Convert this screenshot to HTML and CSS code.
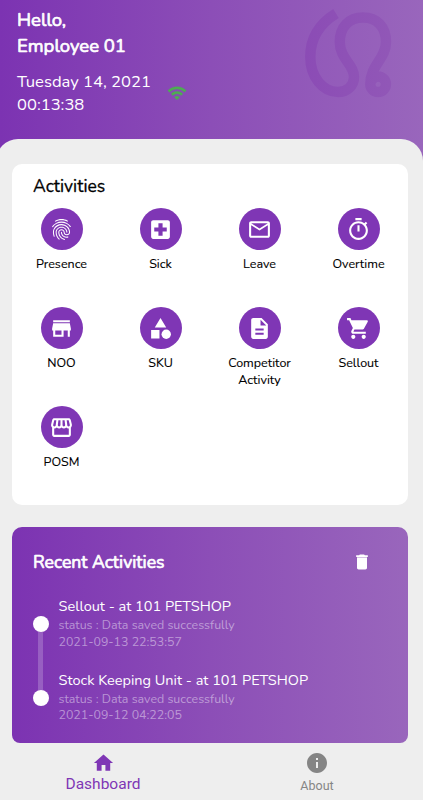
FILE: index.html
```html
<!DOCTYPE html>
<html>
	<head>
		<meta charset="UTF-8">
		<title>Dashboard</title>
		<link rel="stylesheet" href="styles.css">
	</head>
	<body>
		<div class="header">
			<div class="hello">Hello,<br>Employee 01</div>
			<div class="clock">
				<div class="date">Tuesday 14, 2021<br>00:13:38</div>
				<svg class="wifi" viewBox="0 0 24 24"><path d="M1 9l2 2c4.97-4.97 13.03-4.97 18 0l2-2C16.93 2.93 7.08 2.93 1 9zm8 8l3 3 3-3c-1.65-1.66-4.34-1.66-6 0zm-4-4l2 2c2.76-2.76 7.24-2.76 10 0l2-2C15.14 9.14 8.87 9.14 5 13z"/></svg>
			</div>
			<svg class="logo" viewBox="0 0 90 92">
				<defs>
					<linearGradient id="logoLine" gradientUnits="userSpaceOnUse" x1="0" y1="0" x2="90" y2="0">
						<stop offset="0" stop-color="#8b4bb5"/>
						<stop offset="1" stop-color="#9157b7"/>
					</linearGradient>
				</defs>
				<path d="M36 7.500C19 18 10.300 32 10.300 51C10.300 71 23 86 38 86C47 86 54 80 54 71C54 58 39.800 53 39.800 36C39.800 21 49 11.500 63 11.500C77 11.500 86 21 86 36C86 53 70.300 59 70.300 78.300A7.800 7.800 0 1 0 78.100 70.500Q74 70.500 71 75" fill="none" stroke="url(#logoLine)" stroke-width="10.500"/>
			</svg>
		</div>
		<div class="main">
			<div class="card">
				<div class="title">Activities</div>
				<div class="menu">
					<div class="item">
						<div class="icon"><svg viewBox="0 0 24 24"><path d="M17.810 4.470c-.08 0-.16-.02-.23-.06C15.660 3.420 14 3 12.010 3c-1.980 0-3.860.47-5.570 1.410-.24.13-.54.04-.68-.2-.13-.24-.04-.55.2-.68C7.820 2.520 9.860 2 12.010 2c2.130 0 3.990.47 6.030 1.520.25.13.34.43.21.67-.09.18-.26.28-.44.28zM3.500 9.720c-.1 0-.2-.03-.29-.09-.23-.16-.28-.47-.12-.7.99-1.400 2.250-2.500 3.750-3.270C9.980 4.040 14 4.030 17.150 5.650c1.500.77 2.760 1.860 3.750 3.250.16.22.11.54-.12.7-.23.16-.54.11-.7-.12-.9-1.260-2.040-2.250-3.390-2.940-2.870-1.470-6.540-1.470-9.400.01-1.360.7-2.500 1.700-3.400 2.960-.08.14-.23.21-.39.21zm6.250 12.070c-.13 0-.26-.05-.35-.15-.87-.87-1.340-1.430-2.010-2.640-.69-1.230-1.050-2.730-1.050-4.340 0-2.970 2.540-5.390 5.660-5.390s5.660 2.420 5.660 5.390c0 .28-.22.5-.5.5s-.5-.22-.5-.5c0-2.420-2.090-4.390-4.660-4.390-2.570 0-4.660 1.970-4.660 4.390 0 1.440.32 2.770.93 3.850.64 1.150 1.080 1.640 1.850 2.420.19.2.19.51 0 .71-.11.1-.24.15-.37.15zm7.170-1.850c-1.190 0-2.240-.3-3.100-.89-1.490-1.010-2.380-2.650-2.380-4.390 0-.28.22-.5.5-.5s.5.22.5.5c0 1.410.72 2.740 1.940 3.560.71.48 1.540.71 2.540.71.24 0 .64-.03 1.040-.1.27-.05.53.13.58.41.05.27-.13.53-.41.58-.57.11-1.070.12-1.210.12zM14.910 22c-.04 0-.09-.01-.13-.02-1.590-.44-2.630-1.030-3.720-2.100-1.400-1.390-2.170-3.240-2.170-5.220 0-1.620 1.380-2.940 3.080-2.940s3.080 1.320 3.080 2.940c0 1.070.93 1.940 2.080 1.940s2.080-.87 2.080-1.940c0-3.770-3.250-6.830-7.250-6.830-2.840 0-5.440 1.580-6.610 4.030-.39.81-.59 1.760-.59 2.800 0 .78.07 2.010.67 3.610.1.26-.03.55-.29.64-.26.1-.55-.04-.64-.29-.49-1.310-.73-2.610-.73-3.960 0-1.200.23-2.290.68-3.240 1.330-2.790 4.280-4.600 7.510-4.600 4.550 0 8.250 3.510 8.250 7.830 0 1.620-1.380 2.940-3.080 2.940s-3.080-1.320-3.080-2.940c0-1.070-.93-1.940-2.080-1.940s-2.080.87-2.080 1.940c0 1.710.66 3.310 1.870 4.510.95.94 1.860 1.460 3.270 1.850.27.07.42.35.35.61-.05.23-.26.38-.47.38z"/></svg></div>
						<span>Presence</span>
					</div>
					<div class="item">
						<div class="icon"><svg viewBox="0 0 24 24"><path d="M19 3H5c-1.100 0-2 .9-2 2v14c0 1.100.9 2 2 2h14c1.100 0 2-.9 2-2V5c0-1.100-.9-2-2-2zm-1 11h-4v4h-4v-4H6v-4h4V6h4v4h4v4z"/></svg></div>
						<span>Sick</span>
					</div>
					<div class="item">
						<div class="icon"><svg viewBox="0 0 24 24"><path d="M20 4H4c-1.100 0-2 .9-2 2v12c0 1.100.9 2 2 2h16c1.100 0 2-.9 2-2V6c0-1.100-.9-2-2-2zm0 14H4V8l8 5 8-5v10zm-8-7L4 6h16l-8 5z"/></svg></div>
						<span>Leave</span>
					</div>
					<div class="item">
						<div class="icon"><svg viewBox="0 0 24 24"><path d="M15 1H9v2h6V1zm-4 13h2V8h-2v6zm8.030-6.610l1.420-1.420c-.43-.51-.9-.99-1.410-1.410l-1.420 1.420C16.070 4.740 14.120 4 12 4c-4.970 0-9 4.030-9 9s4.020 9 9 9 9-4.030 9-9c0-2.120-.74-4.070-1.970-5.610zM12 20c-3.870 0-7-3.130-7-7s3.130-7 7-7 7 3.130 7 7-3.130 7-7 7z"/></svg></div>
						<span>Overtime</span>
					</div>
					<div class="item">
						<div class="icon"><svg viewBox="0 0 24 24"><path d="M20 4H4v2h16V4zm1 10v-2l-1-5H4l-1 5v2h1v6h10v-6h4v6h2v-6h1zm-9 4H6v-4h6v4z"/></svg></div>
						<span>NOO</span>
					</div>
					<div class="item">
						<div class="icon"><svg viewBox="0 0 24 24"><path d="M12 2l-5.500 9h11zM3 13.500h8v8H3z"/><circle cx="17.500" cy="17.500" r="4.500"/></svg></div>
						<span>SKU</span>
					</div>
					<div class="item">
						<div class="icon"><svg viewBox="0 0 24 24"><path d="M14 2H6c-1.100 0-1.990.9-1.990 2L4 20c0 1.100.89 2 1.990 2H18c1.100 0 2-.9 2-2V8l-6-6zm2 16H8v-2h8v2zm0-4H8v-2h8v2zm-3-5V3.500L18.500 9H13z"/></svg></div>
						<span>Competitor<br>Activity</span>
					</div>
					<div class="item">
						<div class="icon"><svg viewBox="0 0 24 24"><path d="M7 18c-1.100 0-1.990.9-1.990 2S5.900 22 7 22s2-.9 2-2-.9-2-2-2zM1 2v2h2l3.600 7.590-1.350 2.450c-.16.28-.25.61-.25.96 0 1.100.9 2 2 2h12v-2H7.420c-.14 0-.25-.11-.25-.25l.03-.12.9-1.630h7.450c.75 0 1.410-.41 1.750-1.030l3.580-6.490c.08-.14.12-.31.12-.48 0-.55-.45-1-1-1H5.210l-.94-2H1zm16 16c-1.100 0-1.990.9-1.990 2s.89 2 1.990 2 2-.9 2-2-.9-2-2-2z"/></svg></div>
						<span>Sellout</span>
					</div>
					<div class="item">
						<div class="icon"><svg viewBox="0 0 24 24"><path d="M21.900 8.890l-1.050-4.370c-.22-.9-1-1.520-1.910-1.520H5.050c-.9 0-1.690.63-1.900 1.520L2.100 8.890c-.24 1.020-.02 2.060.62 2.880.08.11.19.19.28.29V19c0 1.100.9 2 2 2h14c1.100 0 2-.9 2-2v-6.940c.09-.09.2-.18.28-.28.64-.82.87-1.870.62-2.890zM18.910 4.990l1.050 4.370c.1.42.01.84-.25 1.170-.14.18-.44.47-.94.47-.61 0-1.140-.49-1.210-1.140L16.980 5l1.930-.01zM13 5h1.960l.54 4.520c.05.39-.07.78-.33 1.070-.22.26-.54.41-.95.41-.67 0-1.220-.59-1.220-1.310V5zM8.490 9.520L9.040 5H11v4.690c0 .72-.55 1.310-1.290 1.310-.34 0-.65-.15-.89-.41-.25-.29-.37-.68-.33-1.070zM4.040 9.360L5.050 5h1.970l-.58 4.860c-.08.65-.6 1.140-1.210 1.140-.49 0-.8-.29-.93-.47-.27-.32-.36-.75-.26-1.170zM5 19v-6.030c.08.01.15.03.23.03.87 0 1.660-.36 2.240-.95.6.6 1.400.95 2.310.95.87 0 1.650-.36 2.230-.93.59.57 1.390.93 2.290.93.84 0 1.640-.35 2.240-.95.58.59 1.370.95 2.240.95.08 0 .15-.02.23-.03V19H5z"/></svg></div>
						<span>POSM</span>
					</div>
				</div>
			</div>
			<div class="recent">
				<div class="recentTop">
					<div class="recentTitle">Recent Activities</div>
					<svg class="trash" viewBox="0 0 24 24"><path d="M6 19c0 1.100.9 2 2 2h8c1.100 0 2-.9 2-2V7H6v12zM19 4h-3.500l-1-1h-5l-1 1H5v2h14V4z"/><path d="M6 6h12v1H6z" opacity=".6"/></svg>
				</div>
				<div class="log">
					<div class="line">
						<i></i>
						<b></b>
						<i></i>
					</div>
					<div class="list">
						<div class="row">
							<p class="name">Sellout - at 101 PETSHOP</p>
							<p class="status">status : Data saved successfully</p>
							<p class="time">2021-09-13 22:53:57</p>
						</div>
						<div class="row">
							<p class="name">Stock Keeping Unit - at 101 PETSHOP</p>
							<p class="status">status : Data saved successfully</p>
							<p class="time">2021-09-12 04:22:05</p>
						</div>
					</div>
				</div>
			</div>
		</div>
		<div class="nav">
			<div class="tab active">
				<svg viewBox="0 0 24 24"><path d="M10 20v-6h4v6h5v-8h3L12 3 2 12h3v8z"/></svg>
				<span>Dashboard</span>
			</div>
			<div class="tab">
				<svg viewBox="0 0 24 24"><path d="M12 2C6.480 2 2 6.480 2 12s4.480 10 10 10 10-4.480 10-10S17.520 2 12 2zm1 15h-2v-6h2v6zm0-8h-2V7h2v2z"/></svg>
				<span>About</span>
			</div>
		</div>
	</body>
</html>
```
FILE: styles.css
```css
*{
	margin: 0;
	padding: 0;
	box-sizing: border-box;
}
body{
	width: 423px;
	height: 800px;
	overflow: hidden;
	display: flex;
	flex-direction: column;
	background-color: #eee;
	font-family: Nunito, Lato, sans-serif;
}
.header{
	position: relative;
	height: 170px;
	flex: none;
	padding: 7px 17px;
	color: white;
	background: linear-gradient(to right, #7c33b2, #8c4eb7 50%, #9966bc);
}
.hello{
	font-size: 18.5px;
	line-height: 26px;
	-webkit-text-stroke: 0.7px white;
}
.clock{
	display: flex;
	gap: 16px;
	margin-top: 11px;
}
.date{
	padding-top: 1px;
	font-size: 16.6px;
	line-height: 22.5px;
}
.wifi{
	width: 20px;
	height: 20px;
	margin-top: 13px;
	fill: #4caf50;
	stroke: #4caf50;
	stroke-width: 0.5;
}
.logo{
	position: absolute;
	left: 300px;
	top: 6px;
	width: 90px;
	height: 92px;
	overflow: visible;
}
.main{
	position: relative;
	flex: 1;
	margin: -31px 0 0 -4px;
	padding: 25px 15px 0 16px;
	border-radius: 22px 22px 0 0;
	background-color: #eee;
}
.card{
	height: 341px;
	padding-top: 11px;
	border-radius: 10px;
	background-color: white;
}
.title{
	padding-left: 21px;
	font-size: 17.5px;
	line-height: 22px;
	-webkit-text-stroke: 0.3px black;
}
.menu{
	display: grid;
	grid-template-columns: repeat(4, 99px);
	grid-auto-rows: 99px;
	margin-top: 11px;
}
.item{
	display: flex;
	flex-direction: column;
	align-items: center;
	text-align: center;
	font-size: 12.5px;
	line-height: 17px;
	-webkit-text-stroke: 0.1px black;
}
.icon{
	display: flex;
	align-items: center;
	justify-content: center;
	width: 42px;
	height: 42px;
	margin-bottom: 5px;
	border-radius: 50%;
	background-color: #7f36b5;
}
.icon svg{
	width: 25px;
	height: 25px;
	fill: white;
}
.recent{
	height: 216px;
	margin-top: 22px;
	padding: 23px 0 0 21px;
	border-radius: 10px 10px 8px 8px;
	color: white;
	background: linear-gradient(to right, #7c33b2, #8c4eb7 50%, #9966bc);
}
.recentTop{
	display: flex;
	justify-content: space-between;
	padding-right: 36px;
}
.recentTitle{
	font-size: 17.6px;
	line-height: 24px;
	-webkit-text-stroke: 0.7px white;
}
.trash{
	width: 20px;
	height: 22px;
	margin-top: 1px;
	fill: white;
}
.log{
	display: flex;
	gap: 10px;
	margin: 22px 0 0 -0.5px;
}
.line{
	display: flex;
	flex-direction: column;
	align-items: center;
	width: 16px;
	padding-top: 19.5px;
}
.line i{
	width: 16px;
	height: 16px;
	border-radius: 50%;
	background-color: white;
}
.line b{
	width: 5px;
	height: 58px;
	background-color: rgba(255,255,255,0.2);
}
.row{
	height: 73.5px;
}
.name{
	font-size: 14.5px;
	line-height: 21px;
}
.status,
.time{
	font-size: 12.4px;
	line-height: 16.5px;
	color: rgba(255,255,255,0.45);
}
.nav{
	position: relative;
	display: grid;
	grid-template-columns: 206px 222px;
	height: 57px;
	flex: none;
	background-color: #eee;
	font-family: Roboto, sans-serif;
}
.tab{
	display: flex;
	flex-direction: column;
	align-items: center;
	padding-top: 8px;
	font-size: 12.5px;
	color: #858585;
}
.tab svg{
	width: 24px;
	height: 24px;
	fill: #858585;
}
.tab span{
	padding-top: 1px;
	line-height: 20px;
}
.active{
	font-size: 15.5px;
	color: #7f36b5;
}
.active svg{
	width: 23px;
	fill: #7f36b5;
}
.active span{
	padding-top: 0;
	margin-top: -1px;
}
```
